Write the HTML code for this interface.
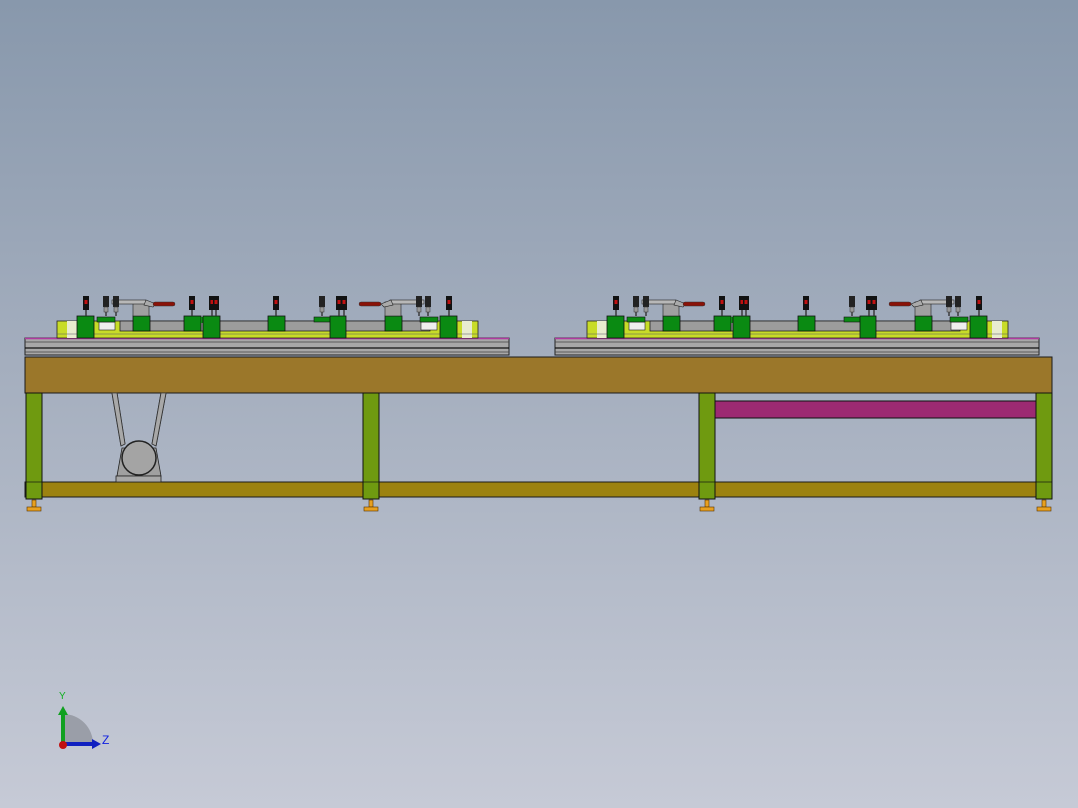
<!DOCTYPE html>
<html><head><style>
html,body{margin:0;padding:0;}
body{width:1078px;height:808px;overflow:hidden;background:linear-gradient(#8898ac 0%,#a4aebe 45%,#c6cad6 100%);}
svg{display:block;}
</style></head><body>
<svg width="1078" height="808" viewBox="0 0 1078 808" xmlns="http://www.w3.org/2000/svg">
<defs>
<g id="post">
  <rect x="-3" y="296" width="6" height="14" fill="#111"/>
  <rect x="-1.5" y="300" width="3" height="4" fill="#c01010"/>
  <rect x="-0.7" y="310" width="1.4" height="6" fill="#333"/>
</g>
<g id="post2">
  <rect x="-3" y="296" width="6" height="11" fill="#222"/>
  <rect x="-2" y="307" width="4" height="5" fill="#999" stroke="#333" stroke-width="0.5"/>
  <rect x="-0.7" y="312" width="1.4" height="4" fill="#333"/>
</g>
<g id="fix">
  <!-- rail plate -->
  <rect x="25" y="338" width="484" height="17" fill="#a8a8a8" stroke="#222" stroke-width="1"/>
  <line x1="25" y1="338.5" x2="509" y2="338.5" stroke="#b03aa0" stroke-width="1.5"/>
  <line x1="25" y1="342" x2="509" y2="342" stroke="#444" stroke-width="0.8"/>
  <line x1="25" y1="348" x2="509" y2="348" stroke="#111" stroke-width="1.2"/>
  <line x1="25" y1="352" x2="509" y2="352" stroke="#444" stroke-width="0.8"/>
  <!-- yellow base -->
  <rect x="57" y="321" width="421" height="17" fill="#c8dc28" stroke="#222" stroke-width="0.8"/>
  <rect x="67" y="321" width="10" height="17" fill="#e8ecd0"/>
  <rect x="462" y="321" width="10" height="17" fill="#e8ecd0"/>
  <rect x="120" y="321" width="310" height="10" fill="#9c9c9c" stroke="#222" stroke-width="0.8"/>
  <rect x="99" y="322" width="16" height="8" fill="#eeeeee" stroke="#222" stroke-width="0.6"/>
  <rect x="421" y="322" width="16" height="8" fill="#eeeeee" stroke="#222" stroke-width="0.6"/>
  <line x1="57" y1="334" x2="478" y2="334" stroke="#556" stroke-width="0.6"/>
  <!-- short green -->
  <rect x="97" y="317" width="18" height="5" fill="#0a8a12" stroke="#111" stroke-width="0.6"/>
  <rect x="314" y="317" width="18" height="5" fill="#0a8a12" stroke="#111" stroke-width="0.6"/>
  <rect x="420" y="317" width="18" height="5" fill="#0a8a12" stroke="#111" stroke-width="0.6"/>
  <rect x="133" y="316" width="17" height="15" fill="#0a8a12" stroke="#111" stroke-width="0.8"/>
  <rect x="184" y="316" width="17" height="15" fill="#0a8a12" stroke="#111" stroke-width="0.8"/>
  <rect x="268" y="316" width="17" height="15" fill="#0a8a12" stroke="#111" stroke-width="0.8"/>
  <rect x="385" y="316" width="17" height="15" fill="#0a8a12" stroke="#111" stroke-width="0.8"/>
  <rect x="201" y="317" width="5" height="6" fill="#0a8a12"/>
  <!-- tall green -->
  <rect x="77" y="316" width="17" height="22" fill="#0a8a12" stroke="#111" stroke-width="0.8"/>
  <rect x="203" y="316" width="17" height="22" fill="#0a8a12" stroke="#111" stroke-width="0.8"/>
  <rect x="330" y="316" width="16" height="22" fill="#0a8a12" stroke="#111" stroke-width="0.8"/>
  <rect x="440" y="316" width="17" height="22" fill="#0a8a12" stroke="#111" stroke-width="0.8"/>
  <!-- clamp bodies -->
  <rect x="133" y="302" width="16" height="14" fill="#a0a0a0" stroke="#222" stroke-width="0.6"/>
  <rect x="385" y="302" width="16" height="14" fill="#a0a0a0" stroke="#222" stroke-width="0.6"/>
  <rect x="112" y="300" width="34" height="4" fill="#b8b8b8" stroke="#222" stroke-width="0.6"/>
  <rect x="390" y="300" width="34" height="4" fill="#b8b8b8" stroke="#222" stroke-width="0.6"/>
  <path d="M146 300 L156 304 L153 307 L144 305 Z" fill="#aaa" stroke="#222" stroke-width="0.6"/>
  <path d="M391 300 L381 304 L384 307 L393 305 Z" fill="#aaa" stroke="#222" stroke-width="0.6"/>
  <rect x="153" y="302" width="22" height="4" rx="2" fill="#8a1208" stroke="#333" stroke-width="0.5"/>
  <rect x="359" y="302" width="22" height="4" rx="2" fill="#8a1208" stroke="#333" stroke-width="0.5"/>
  <!-- posts -->
  <use href="#post" x="86"/><use href="#post2" x="106"/><use href="#post2" x="116"/>
  <use href="#post" x="192"/><use href="#post" x="212"/><use href="#post" x="216"/>
  <use href="#post" x="276"/><use href="#post2" x="322"/><use href="#post" x="339"/><use href="#post" x="344"/>
  <use href="#post2" x="419"/><use href="#post2" x="428"/><use href="#post" x="449"/>
</g>
</defs>

<use href="#fix"/>
<use href="#fix" x="530"/>

<!-- top beam -->
<rect x="25" y="357" width="1027" height="36" fill="#9b772a" stroke="#1a1a1a" stroke-width="1"/>

<!-- bottom beam -->
<rect x="25" y="482" width="1027" height="15" fill="#9c820f" stroke="#1a1a1a" stroke-width="1"/>

<!-- magenta bar -->
<rect x="715" y="401" width="321" height="17" fill="#9c2a72" stroke="#111" stroke-width="1"/>

<!-- motor & belts -->
<path d="M112 393 L121 446 M117 393 L125 444 M166 393 L156 446 M161 393 L152 444" stroke="#333" stroke-width="1" fill="#a8a8a8"/>
<path d="M112 393 L117 393 L125 444 L121 446 Z M166 393 L161 393 L152 444 L156 446 Z" fill="#a8a8a8" stroke="#333" stroke-width="0.8"/>
<path d="M117 476 L122 448 L156 448 L161 476 Z" fill="#a0a0a0" stroke="#222" stroke-width="0.8"/>
<circle cx="139" cy="458" r="17" fill="#a4a4a4" stroke="#222" stroke-width="1.5"/>
<rect x="116" y="476" width="45" height="6" fill="#a8a8a8" stroke="#222" stroke-width="0.8"/>

<!-- legs -->
<g fill="#6f9a10" stroke="#111" stroke-width="1">
<rect x="26" y="393" width="16" height="106"/>
<rect x="363" y="393" width="16" height="106"/>
<rect x="699" y="393" width="16" height="106"/>
<rect x="1036" y="393" width="16" height="106"/>
</g>
<g stroke="#111" stroke-width="0.7">
<line x1="26" y1="482" x2="42" y2="482"/><line x1="363" y1="482" x2="379" y2="482"/>
<line x1="699" y1="482" x2="715" y2="482"/><line x1="1036" y1="482" x2="1052" y2="482"/>
</g>
<!-- feet -->
<g fill="#e8a020" stroke="#553300" stroke-width="0.6">
<rect x="32" y="500" width="4" height="7"/><rect x="27" y="507" width="14" height="4"/>
<rect x="369" y="500" width="4" height="7"/><rect x="364" y="507" width="14" height="4"/>
<rect x="705" y="500" width="4" height="7"/><rect x="700" y="507" width="14" height="4"/>
<rect x="1042" y="500" width="4" height="7"/><rect x="1037" y="507" width="14" height="4"/>
</g>

<!-- triad -->
<path d="M63 744 L63 714 A30 30 0 0 1 93 744 Z" fill="#9a9ea8"/>
<rect x="61" y="713" width="4" height="31" fill="#10a020"/>
<path d="M58 715 L63 706 L68 715 Z" fill="#10a020"/>
<rect x="63" y="742" width="31" height="4" fill="#1020c0"/>
<path d="M92 739 L101 744 L92 749 Z" fill="#1020c0"/>
<circle cx="63" cy="745" r="4" fill="#c01010"/>
<text x="59" y="699" font-family="Liberation Sans, sans-serif" font-size="10" fill="#10b020">Y</text>
<text x="102" y="744" font-family="Liberation Sans, sans-serif" font-size="12" fill="#1020e0">Z</text>
</svg>
</body></html>
